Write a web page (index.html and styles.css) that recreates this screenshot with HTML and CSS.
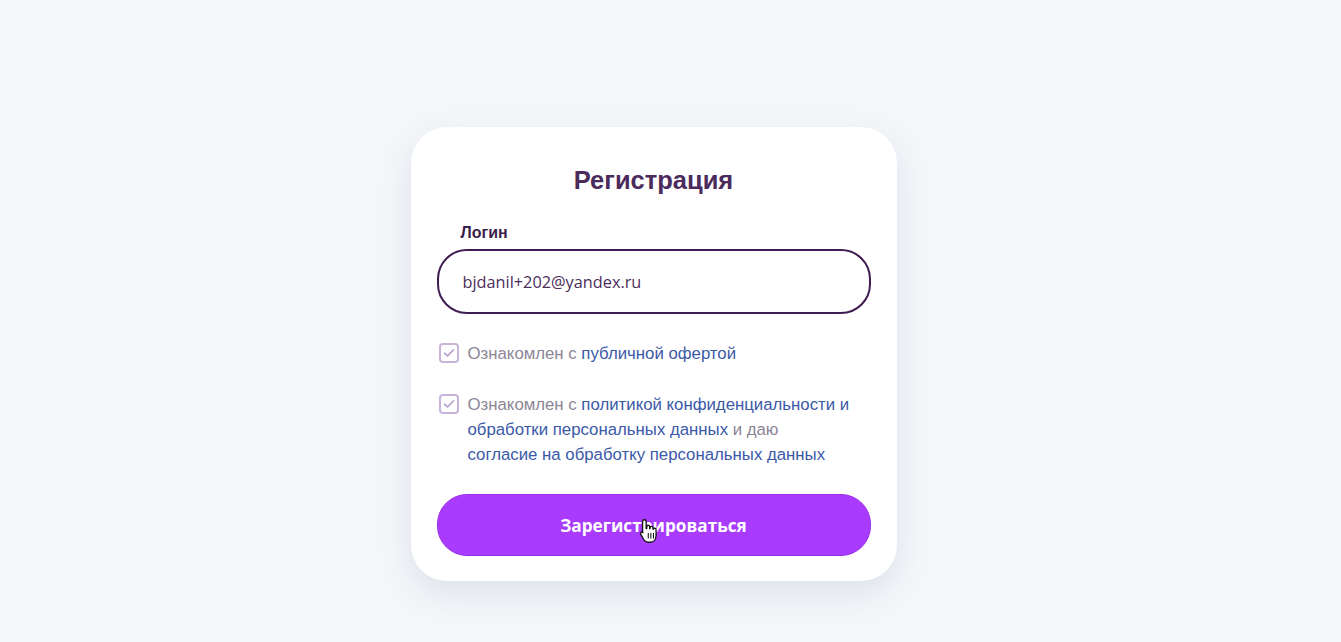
FILE: index.html
```html
<!DOCTYPE html>
<html lang="ru">
  <head>
    <meta charset="utf-8">
    <link rel="stylesheet" href="styles.css">
    <title>Регистрация</title>
  </head>
  <body>
    <div class="page">
      <div class="card">
        <h1 class="title">Регистрация</h1>
        <label class="field-label" for="login">Логин</label>
        <div class="input-box">
          <span id="login" class="input-value">bjdanil+202@yandex.ru</span>
        </div>
        <div class="check-row first">
          <span class="check-box">
            <svg width="12" height="10" viewBox="0 0 12 10"><path d="M1.5 5.2 L4.6 8 L10.5 1.8" fill="none" stroke="#b49acb" stroke-width="1.6" stroke-linecap="round" stroke-linejoin="round"/></svg>
          </span>
          <p class="check-text">Ознакомлен с <a href="#">публичной офертой</a></p>
        </div>
        <div class="check-row">
          <span class="check-box">
            <svg width="12" height="10" viewBox="0 0 12 10"><path d="M1.5 5.2 L4.6 8 L10.5 1.8" fill="none" stroke="#b49acb" stroke-width="1.6" stroke-linecap="round" stroke-linejoin="round"/></svg>
          </span>
          <p class="check-text">Ознакомлен с <a href="#">политикой конфиденциальности и обработки персональных данных</a> и даю<br><a href="#">согласие на обработку персональных данных</a></p>
        </div>
        <div class="button-wrap">
          <button class="submit-button">Зарегистрироваться</button>
          <svg class="cursor" width="19" height="26" viewBox="0 0 16 22">
            <path d="M4.5 1.5 C5.5 1.5 6 2.2 6 3 L6 9 L6.5 9 L6.5 7.5 C6.5 6.7 7.2 6.3 7.8 6.3 C8.5 6.3 9 6.8 9 7.5 L9 9 L9.3 9 L9.3 8.2 C9.3 7.5 10 7.1 10.6 7.1 C11.2 7.1 11.8 7.6 11.8 8.3 L11.8 9.5 L12.1 9.5 C12.1 8.9 12.6 8.5 13.2 8.5 C13.9 8.5 14.4 9 14.4 9.7 L14.4 14.5 C14.4 17.5 12.8 20.5 9.5 20.5 L7.8 20.5 C5.8 20.5 4.8 19.6 3.8 18 L1.4 13.6 C1 12.9 1.3 12.1 2 11.9 C2.6 11.7 3.1 12 3.4 12.5 L3 12.2 L3 3 C3 2.2 3.6 1.5 4.5 1.5 Z" fill="#ffffff" stroke="#111111" stroke-width="1.1" stroke-linejoin="round"/>
            <path d="M7.8 13 L7.8 17 M10 13 L10 17 M12.2 13 L12.2 17" stroke="#111111" stroke-width="0.9" stroke-linecap="round"/>
          </svg>
        </div>
      </div>
    </div>
  </body>
</html>
```

FILE: styles.css
```css
body{
  margin: 0;
  background-color: #f4f6f9;
  font-family: 'Liberation Sans', Arial, sans-serif;
  min-height: 642px;
}
.page{
  display: flex;
  justify-content: center;
  padding-top: 127px;
  padding-right: 34px;
}
.card{
  width: 434px;
  padding: 37px 26px 25px 26px;
  background-color: #ffffff;
  border-radius: 36px;
  box-shadow: 0 12px 30px rgba(120, 140, 170, 0.18);
  display: flex;
  flex-direction: column;
}
.title{
  margin: 0;
  text-align: center;
  font-size: 25.5px;
  line-height: 32px;
  font-weight: bold;
  color: #4a2b5c;
}
.field-label{
  margin-top: 27px;
  padding-left: 24px;
  font-size: 16px;
  line-height: 20px;
  font-weight: bold;
  color: #3b1d4a;
}
.input-box{
  margin-top: 6px;
  height: 61px;
  border: 2px solid #3f1c52;
  border-radius: 30px;
  padding: 0 24px;
  display: flex;
  align-items: center;
}
.input-value{
  font-family: 'Open Sans', 'Noto Sans', sans-serif;
  font-size: 16.3px;
  color: #4c2d5c;
}
.check-row{
  display: flex;
  gap: 9px;
  margin-top: 26px;
  padding-left: 2px;
}
.check-row.first{
  margin-top: 27px;
}
.check-box{
  flex: none;
  width: 16px;
  height: 16px;
  margin-top: 2px;
  border: 2px solid #c9b3da;
  border-radius: 4px;
  display: flex;
  justify-content: center;
  align-items: center;
}
.check-text{
  margin: 0;
  font-size: 16.8px;
  line-height: 25px;
  color: #8c8596;
}
.check-text a{
  color: #3b59a8;
  text-decoration: none;
}
.button-wrap{
  position: relative;
  margin-top: 27px;
}
.submit-button{
  width: 100%;
  height: 62px;
  border: 1px solid #9a2ee8;
  border-radius: 30px;
  background-color: #a93bff;
  color: #ffffff;
  font-family: 'Open Sans', 'Noto Sans', sans-serif;
  font-size: 17.2px;
  font-weight: bold;
}
.cursor{
  position: absolute;
  left: 202px;
  top: 24px;
}
```
